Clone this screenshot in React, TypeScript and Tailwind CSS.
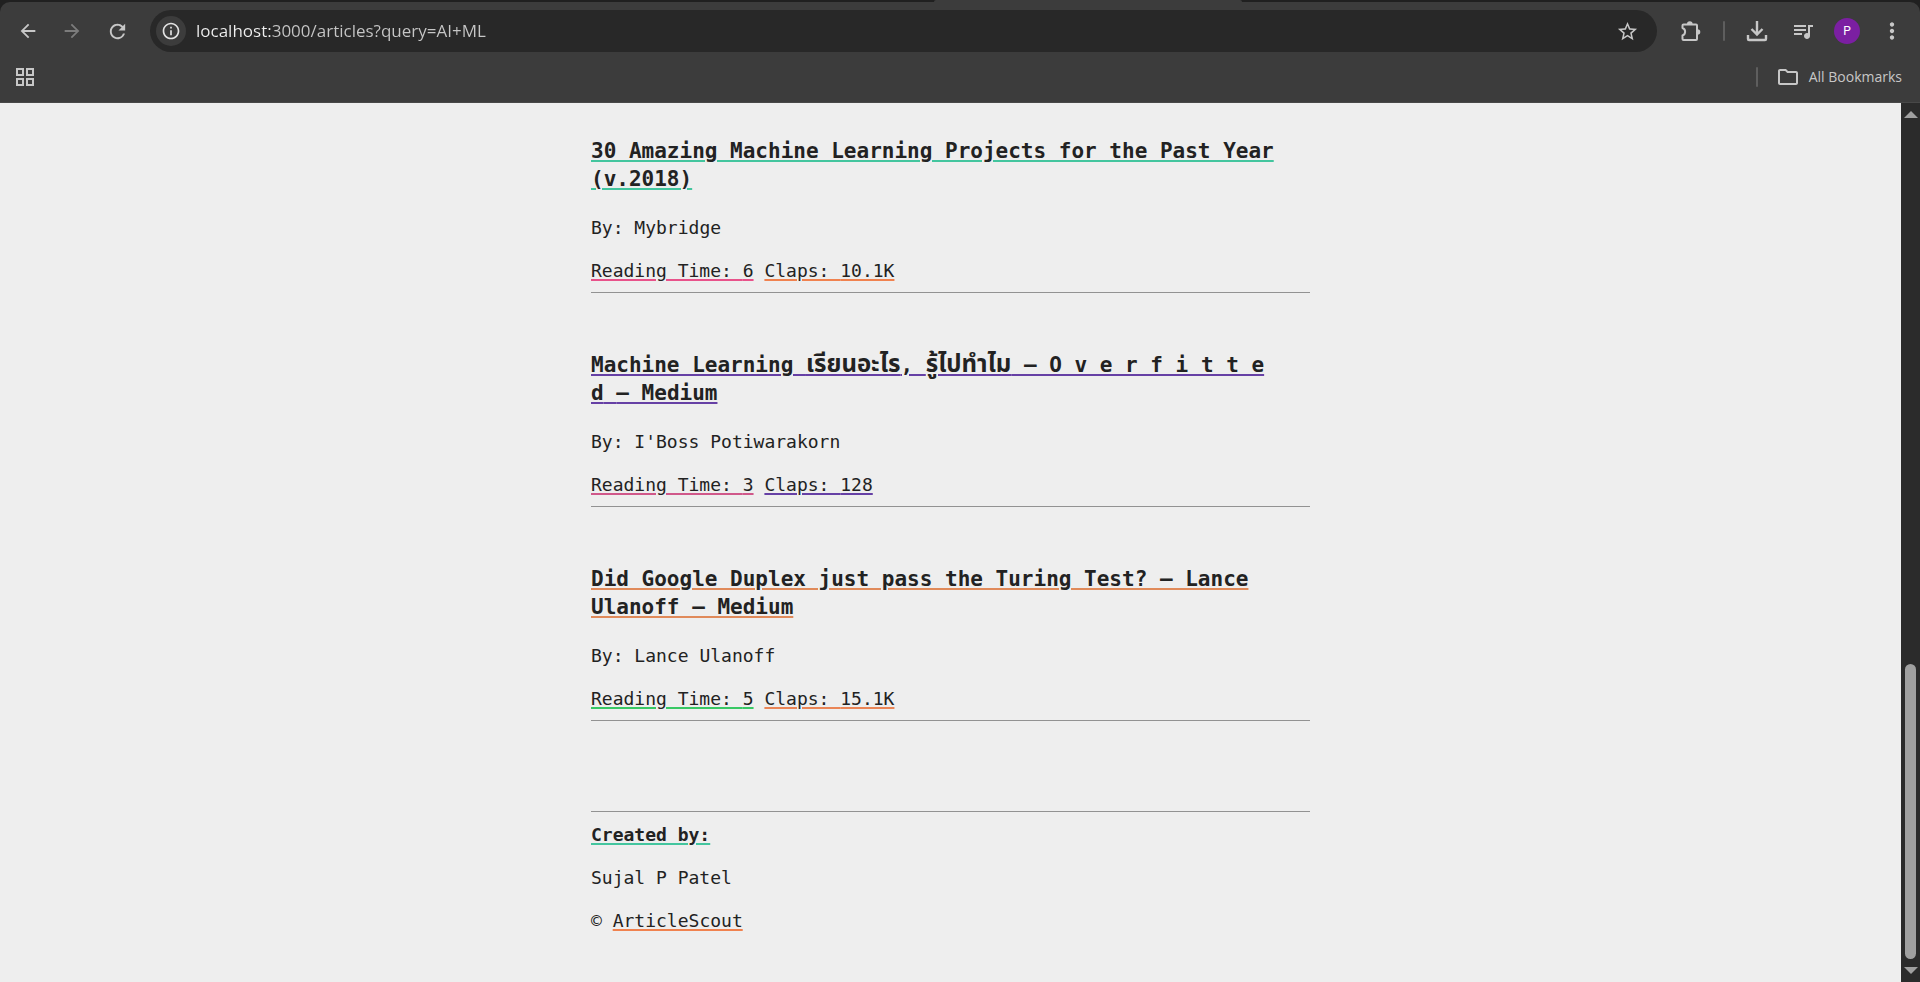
import type { ReactNode } from "react";
import {
  MdArrowBack,
  MdArrowForward,
  MdInfoOutline,
  MdMoreVert,
  MdOutlineFolder,
  MdQueueMusic,
  MdRefresh,
  MdStarBorder,
} from "react-icons/md";

type Article = {
  title: ReactNode;
  author: string;
  minutes: number;
  claps: string;
  titleLine: string;
  timeLine: string;
  clapsLine: string;
};

const articles: Article[] = [
  {
    title: "30 Amazing Machine Learning Projects for the Past Year (v.2018)",
    author: "Mybridge",
    minutes: 6,
    claps: "10.1K",
    titleLine: "decoration-[#43c59e]",
    timeLine: "decoration-[#e8528a]",
    clapsLine: "decoration-[#f0824f]",
  },
  {
    title: (
      <>
        Machine Learning <Thai>เรียนอะไร</Thai>, <Thai>รู้ไปทำไม</Thai> – O v e r f i t t e d{"\u00a0"}– Medium
      </>
    ),
    author: "I'Boss Potiwarakorn",
    minutes: 3,
    claps: "128",
    titleLine: "decoration-[#6640a5]",
    timeLine: "decoration-[#d0588a]",
    clapsLine: "decoration-[#6640a5]",
  },
  {
    title: "Did Google Duplex just pass the Turing Test? – Lance Ulanoff – Medium",
    author: "Lance Ulanoff",
    minutes: 5,
    claps: "15.1K",
    titleLine: "decoration-[#e08a5a]",
    timeLine: "decoration-[#38c864]",
    clapsLine: "decoration-[#ea8556]",
  },
];

function Thai({ children }: { children: ReactNode }) {
  return (
    <span lang="th" className="text-2xl leading-none whitespace-nowrap">
      {children}
    </span>
  );
}

function IconButton({
  label,
  className = "",
  color = "text-[#c7c7c7]",
  children,
}: {
  label: string;
  className?: string;
  color?: string;
  children: ReactNode;
}) {
  return (
    <button type="button" aria-label={label} className={`grid size-8 shrink-0 place-items-center ${color} ${className}`}>
      {children}
    </button>
  );
}

function PuzzleIcon() {
  return (
    <svg viewBox="0 0 22 22" className="size-[22px]" fill="none" stroke="currentColor" strokeWidth="2" strokeLinejoin="round">
      <path d="M2.500 8V5.500a1 1 0 0 1 1-1H16a1 1 0 0 1 1 1V19a1 1 0 0 1-1 1H3.500a1 1 0 0 1-1-1v-3.500a4 4 0 0 0 0-7.500z" />
      <path d="M7 4a2.800 2.800 0 0 1 5.600 0zM17.500 9.200a2.800 2.800 0 0 1 0 5.600z" fill="currentColor" stroke="none" />
    </svg>
  );
}

function DownloadIcon() {
  return (
    <svg viewBox="0 0 22 22" className="size-[22px]" fill="none" stroke="currentColor" strokeWidth="2.400">
      <path d="M11 1v13M5.500 9l5.500 5.500L16.500 9" />
      <path d="M2 15v4a1 1 0 0 0 1 1h16a1 1 0 0 0 1-1v-4" />
    </svg>
  );
}

function AppsIcon() {
  return (
    <svg viewBox="0 0 18 18" className="size-[18px]" fill="none" stroke="currentColor" strokeWidth="2">
      <path d="M1 1h6v6H1zM11 1h6v6h-6zM1 11h6v6H1zM11 11h6v6h-6z" />
    </svg>
  );
}

function BrowserChrome() {
  return (
    <header className="bg-[#202020] font-['Open_Sans',sans-serif]">
      <div className="h-[2px] pl-[934px]">
        <div className="h-[2px] w-[308px] rounded-t-sm bg-[#3c3c3c]" />
      </div>
      <div className="rounded-t-[10px] border-b border-[#484848] bg-[#3c3c3c]">
        <div className="flex items-center pt-2 pr-3">
          <IconButton label="Back" className="ml-3">
            <MdArrowBack className="size-[22px]" />
          </IconButton>
          <IconButton label="Forward" className="ml-3" color="text-[#7c7c7c]">
            <MdArrowForward className="size-[22px]" />
          </IconButton>
          <IconButton label="Reload" className="ml-[13px]">
            <MdRefresh className="size-[23px]" />
          </IconButton>
          <div className="ml-[17px] flex h-[42px] flex-1 items-center rounded-full bg-[#282828] pr-[14px] pl-[6px]">
            <button type="button" aria-label="Site information" className="grid size-[30px] place-items-center rounded-full bg-[#3c3c3c] text-[#e3e3e3]">
              <MdInfoOutline className="size-5" />
            </button>
            <input
              type="text"
              aria-label="Address"
              defaultValue="localhost:3000/articles?query=AI+ML"
              className="ml-[10px] min-w-0 flex-1 bg-[linear-gradient(90deg,#f0f0f0_76px,#c7c7c7_76px)] bg-clip-text text-[17px] text-transparent outline-none"
            />
            <IconButton label="Bookmark this page">
              <MdStarBorder className="size-[23px]" />
            </IconButton>
          </div>
          <IconButton label="Extensions" className="ml-[18px]">
            <PuzzleIcon />
          </IconButton>
          <div className="ml-4 h-5 w-[2px] rounded-full bg-[#5e5e5e]" />
          <IconButton label="Downloads" className="ml-4">
            <DownloadIcon />
          </IconButton>
          <IconButton label="Media controls" className="ml-[14px]">
            <MdQueueMusic className="size-6" />
          </IconButton>
          <button type="button" aria-label="Profile" className="ml-[15px] grid size-[26px] place-items-center rounded-full bg-[#7b1fa2] font-['Roboto',sans-serif] text-xs text-white">
            P
          </button>
          <IconButton label="Menu" className="ml-4">
            <MdMoreVert className="size-[26px]" />
          </IconButton>
        </div>
        <div className="flex h-[50px] items-center justify-between pr-[18px] pl-[9px]">
          <IconButton label="Apps">
            <AppsIcon />
          </IconButton>
          <div className="flex items-center">
            <div className="h-5 w-[2px] rounded-full bg-[#5e5e5e]" />
            <button type="button" className="ml-[18px] flex items-center gap-[9px] text-sm text-[#c7c7c7]">
              <MdOutlineFolder className="size-6" />
              All Bookmarks
            </button>
          </div>
        </div>
      </div>
    </header>
  );
}

function ArticleEntry({ article }: { article: Article }) {
  return (
    <article className="border-b border-[#929292] pb-[10px]">
      <h3 className="text-[21px] leading-7 font-bold">
        <a href="#" className={`underline decoration-2 underline-offset-2 ${article.titleLine}`}>
          {article.title}
        </a>
      </h3>
      <p className="mt-[23px]">By: {article.author}</p>
      <p className="mt-5">
        <span className={`underline decoration-2 underline-offset-2 ${article.timeLine}`}>Reading Time: {article.minutes}</span>{" "}
        <span className={`underline decoration-2 underline-offset-2 ${article.clapsLine}`}>Claps: {article.claps}</span>
      </p>
    </article>
  );
}

function ScrollTrack() {
  return (
    <div className="flex w-[19px] shrink-0 flex-col items-center justify-between bg-[#2b2b2b] py-2 text-[#a0a0a0]" aria-hidden="true">
      <svg viewBox="0 0 14 7" className="h-[7px] w-[14px]" fill="currentColor">
        <path d="M7 0l7 7H0z" />
      </svg>
      <div className="flex flex-col items-center gap-2">
        <div className="h-[295px] w-[11px] rounded-full bg-[#a0a0a0]" />
        <svg viewBox="0 0 14 7" className="h-[7px] w-[14px]" fill="currentColor">
          <path d="M0 0h14L7 7z" />
        </svg>
      </div>
    </div>
  );
}

export default function App() {
  return (
    <div className="flex min-h-screen flex-col bg-[#eeeeee]">
      <BrowserChrome />
      <div className="flex flex-1">
        <div className="min-w-0 flex-1 px-6 pt-[34px] pb-10 font-['DejaVu_Sans_Mono','Noto_Sans_Thai','Noto_Sans',monospace] text-lg leading-[23px] text-[#222222]">
          <div className="mx-auto max-w-[719px]">
            <main className="flex flex-col gap-[58px]">
              {articles.map((article) => (
                <ArticleEntry key={article.author} article={article} />
              ))}
            </main>
            <footer className="mt-[90px] border-t border-[#929292] pt-[11px]">
              <p className="font-bold">
                <span className="underline decoration-[#43c59e] decoration-2 underline-offset-2">Created by:</span>
              </p>
              <p className="mt-5">Sujal P Patel</p>
              <p className="mt-5">
                ©{" "}
                <a href="#" className="underline decoration-[#f0824f] decoration-2 underline-offset-2">
                  ArticleScout
                </a>
              </p>
            </footer>
          </div>
        </div>
        <ScrollTrack />
      </div>
    </div>
  );
}
